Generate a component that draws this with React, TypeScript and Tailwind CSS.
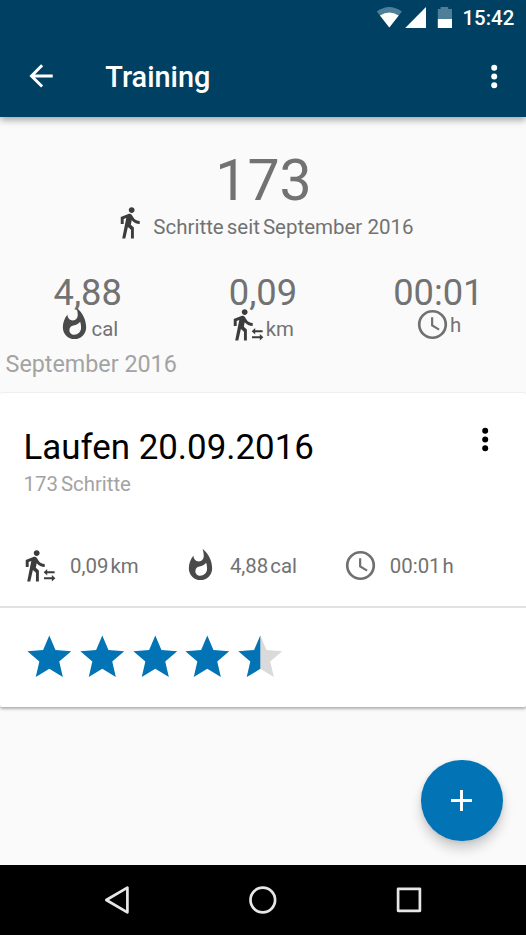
import type { ReactNode } from "react";

function Icon({ children, className = "" }: { children: ReactNode; className?: string }) {
  return (
    <svg viewBox="0 0 24 24" fill="currentColor" className={`block h-[35px] w-[35px] shrink-0 overflow-visible ${className}`}>
      {children}
    </svg>
  );
}

const WALK =
  "M13.5 5.5c1.1 0 2-.9 2-2s-.9-2-2-2-2 .9-2 2 .9 2 2 2zM9.8 8.9L7 23h2.1l1.8-8 2.1 2v6h2v-7.5l-2.1-2 .6-3C14.8 12 16.8 13 19 13v-2c-1.9 0-3.5-1-4.3-2.4l-1-1.6c-.4-.6-1-1-1.7-1-.3 0-.5.1-.8.1L6 8.3V13h2V9.6l1.8-.7";

const STAR =
  "M12 17.27L18.18 21l-1.64-7.03L22 9.24l-7.19-.61L12 2 9.19 8.63 2 9.24l5.46 4.73L5.82 21z";

function WalkIcon() {
  return (
    <Icon className="text-[#3c3c3c]">
      <path d={WALK} />
    </Icon>
  );
}

function DistanceIcon() {
  return (
    <Icon className="text-[#3c3c3c]">
      <path d={WALK} />
      <path d="M18.3 16.6l2.4-2.2v1.5h5.1v1.4h-5.1v1.5z" />
      <path d="M26.3 20.7l-2.4-2.2V20h-5.4v1.4h5.4v1.5z" />
    </Icon>
  );
}

function FlameIcon() {
  return (
    <Icon className="text-[#4a4a4a]">
      <path d="M13.5.67s.74 2.65.74 4.8c0 2.06-1.35 3.73-3.41 3.73-2.07 0-3.63-1.67-3.63-3.73l.03-.36C5.21 7.51 4 10.62 4 14c0 4.42 3.58 8 8 8s8-3.58 8-8C20 8.61 17.41 3.8 13.5.67zM11.71 19c-1.78 0-3.22-1.4-3.22-3.14 0-1.62 1.05-2.76 2.81-3.12 1.77-.36 3.6-1.21 4.62-2.58.39 1.29.59 2.65.59 4.04 0 2.65-2.15 4.8-4.8 4.8z" />
    </Icon>
  );
}

function ClockIcon() {
  return (
    <Icon className="text-[#707070]">
      <circle cx="12" cy="12" r="9.1" fill="none" stroke="currentColor" strokeWidth="1.85" />
      <path d="M12.5 7H11v6l5.15 3.1.75-1.2-4.4-2.65z" />
    </Icon>
  );
}

function MoreIcon() {
  return (
    <Icon>
      <circle cx="11.8" cy="6" r="2.05" />
      <circle cx="11.8" cy="12" r="2.05" />
      <circle cx="11.8" cy="18" r="2.05" />
    </Icon>
  );
}

function StatusBar() {
  return (
    <div className="flex h-[35px] items-start pl-[376px]">
      <svg width="78" height="35" viewBox="0 0 78 35" className="block shrink-0">
        <path d="M.8 11.6Q13.3 2.4 25.9 11.6L13.3 27.6z" fill="#4f7f98" />
        <path d="M4 15.5Q13.3 9.5 22.7 15.5L13.3 27.6z" fill="#fff" />
        <path d="M29.2 28L50 7v21z" fill="#fff" />
        <path d="M61.8 9H64.6V7h7.6v2H76v10H61.8z" fill="#4f7f98" />
        <path d="M61.8 19H76v9H61.8z" fill="#fff" />
      </svg>
      <span className="ml-[8.5px] mt-[6px] text-[20.4px] font-medium leading-[25px]">15:42</span>
    </div>
  );
}

function Stat({ value, children }: { value: string; children: ReactNode }) {
  return (
    <div className="flex-1">
      <div className="text-center text-[36.3px] leading-[30px]">{value}</div>
      {children}
    </div>
  );
}

function Amount({ value, unit }: { value: string; unit: string }) {
  return (
    <span className="flex gap-[2px] text-[20.4px] leading-[24px]">
      <span>{value}</span>
      <span>{unit}</span>
    </span>
  );
}

function Rating() {
  return (
    <div className="flex pl-[23.4px] pt-[23.3px]">
      {[1, 1, 1, 1, 0.5].map((fill, i) => (
        <svg key={i} viewBox="0 0 24 24" className="block h-[52.6px] w-[52.6px] shrink-0">
          {fill < 1 && <path d={STAR} fill="#dadada" />}
          <path d={fill < 1 ? "M12 17.27V2L9.19 8.63 2 9.24l5.46 4.73L5.82 21z" : STAR} fill="#0273b4" />
        </svg>
      ))}
    </div>
  );
}

export default function App() {
  return (
    <div className="relative flex h-[935px] w-[526px] flex-col overflow-hidden bg-[#fafafa] font-[Roboto,sans-serif] text-[#727272] whitespace-nowrap">
      <header className="z-10 h-[117px] shrink-0 bg-[#004163] text-white shadow-[0_3px_7px_rgba(0,0,0,0.35)]">
        <StatusBar />
        <div className="flex h-[82px] items-center pl-[23.3px]">
          <Icon>
            <path d="M20.4 10.6H8.23l5.59-5.59L12.4 3.6l-8 8 8 8 1.41-1.41L8.23 12.6H20.4v-2z" />
          </Icon>
          <h1 className="ml-[47px] mt-[2px] flex-1 text-[28.9px] font-medium leading-[35px]">Training</h1>
          <div className="mr-[14.5px]">
            <MoreIcon />
          </div>
        </div>
      </header>

      <section className="h-[276px] shrink-0">
        <div className="pl-[1px] pt-[34px] text-center text-[57.2px] leading-[60px]">173</div>
        <div className="-mt-[6.5px] flex h-[35px] items-start pl-[112.3px]">
          <WalkIcon />
          <span className="ml-[6px] mt-[10.5px] flex gap-[3px] text-[20.5px] leading-[24px]">
            <span>Schritte</span>
            <span>seit</span>
            <span>September 2016</span>
          </span>
        </div>
        <div className="mt-[38px] flex h-[65px]">
          <Stat value="4,88">
            <div className="-mt-px flex items-start pl-[56.6px]">
              <FlameIcon />
              <span className="mt-[10px] text-[20.4px] leading-[24px]">cal</span>
            </div>
          </Stat>
          <Stat value="0,09">
            <div className="-mt-px flex items-start pl-[49.3px]">
              <DistanceIcon />
              <span className="ml-[6px] mt-[10px] text-[20.4px] leading-[24px]">km</span>
            </div>
          </Stat>
          <Stat value="00:01">
            <div className="-mt-px flex items-start pl-[64.3px]">
              <ClockIcon />
              <span className="mt-[6px] text-[20.4px] leading-[24px]">h</span>
            </div>
          </Stat>
        </div>
        <h2 className="mt-[6px] pl-[5.6px] text-[23.3px] leading-[30px] text-[#a3a3a3]">September 2016</h2>
      </section>

      <article className="h-[314px] shrink-0 rounded-[2px] bg-white shadow-[0_2px_3px_rgba(0,0,0,0.3),0_-1px_1px_rgba(0,0,0,0.04)]">
        <div className="flex h-[215px] flex-col border-b-2 border-[#e2e2e2]">
          <div className="flex items-start pl-[23.5px] pt-[29px]">
            <div className="flex-1">
              <h3 className="mt-[6px] text-[34.9px] leading-[40px] text-black">Laufen 20.09.2016</h3>
              <div className="mt-[4px] flex gap-[3px] text-[20.4px] leading-[24px] text-[#a3a3a3]">
                <span>173</span>
                <span>Schritte</span>
              </div>
            </div>
            <div className="mr-[23.3px] text-black">
              <MoreIcon />
            </div>
          </div>
          <div className="mt-[52px] flex items-center pl-[17.3px]">
            <div className="flex w-[165.6px] items-center gap-[17.8px]">
              <DistanceIcon />
              <Amount value="0,09" unit="km" />
            </div>
            <div className="flex w-[160.1px] items-center gap-[12px]">
              <FlameIcon />
              <Amount value="4,88" unit="cal" />
            </div>
            <div className="flex items-center gap-[11.8px]">
              <ClockIcon />
              <Amount value="00:01" unit="h" />
            </div>
          </div>
        </div>
        <Rating />
      </article>

      <button className="absolute left-[420.8px] top-[759.6px] flex h-[81.8px] w-[81.8px] items-center justify-center rounded-full bg-[#0273b4] text-white shadow-[0_8px_12px_rgba(0,0,0,0.18),0_1px_4px_rgba(0,0,0,0.1)]">
        <Icon>
          <path d="M19.2 13H13v6.2h-2V13H4.8v-2H11V4.8h2V11h6.2z" />
        </Icon>
      </button>

      <nav className="z-10 mt-auto flex h-[70px] shrink-0 items-center bg-black pl-[102.7px] text-[#e6e6e6]">
        <svg width="320" height="30" viewBox="0 0 320 30" fill="none" stroke="currentColor" strokeWidth="2.7" strokeLinejoin="round">
          <path d="M3.3 15L24.4 2.7v24.6z" />
          <circle cx="159.8" cy="15" r="12.3" />
          <rect x="295.1" y="3.8" width="21.8" height="22" />
        </svg>
      </nav>
    </div>
  );
}
